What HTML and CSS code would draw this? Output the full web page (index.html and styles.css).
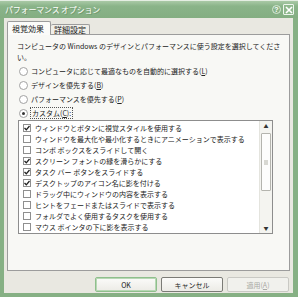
FILE: index.html
```html
<!DOCTYPE html>
<html lang="ja">
<head>
  <meta charset="UTF-8" />
  <title>パフォーマンス オプション</title>
  <link rel="stylesheet" href="styles.css">
</head>
<body>
  <div class="window">
    <div class="titlebar">
      <span class="title">パフォーマンス オプション</span>
      <span class="title-btns">
        <span class="help-btn">?</span>
        <span class="close-btn">
          <svg width="8" height="8" viewBox="0 0 8 8"><path d="M1 1L7 7M7 1L1 7" stroke="#fff" stroke-width="1.6"/></svg>
        </span>
      </span>
    </div>

    <div class="content">
      <div class="tabs">
        <div class="tab active">視覚効果</div>
        <div class="tab">詳細設定</div>
      </div>

      <div class="panel">
        <p class="intro">コンピュータの Windows のデザインとパフォーマンスに使う設定を選択してくださ<br>い。</p>

        <div class="radios">
          <label class="radio-row"><span class="radio"></span>コンピュータに応じて最適なものを自動的に選択する(<u>L</u>)</label>
          <label class="radio-row"><span class="radio"></span>デザインを優先する(<u>B</u>)</label>
          <label class="radio-row"><span class="radio"></span>パフォーマンスを優先する(<u>P</u>)</label>
          <label class="radio-row"><span class="radio on"></span><span class="focus">カスタム(<u>C</u>):</span></label>
        </div>

        <div class="listbox">
          <div class="items" id="items"></div>
          <div class="scrollbar">
            <span class="arrow">&#9650;</span>
            <div class="track">
              <div class="thumb"><span class="grip"></span></div>
            </div>
            <span class="arrow">&#9660;</span>
          </div>
        </div>
      </div>

      <div class="buttons">
        <button class="btn default">OK</button>
        <button class="btn">キャンセル</button>
        <button class="btn disabled">適用(<u>A</u>)</button>
      </div>
    </div>
  </div>

  <script>
    // 視覚効果の一覧（true = チェックあり）
    const effects = [
      ["ウィンドウとボタンに視覚スタイルを使用する", true],
      ["ウィンドウを最大化や最小化するときにアニメーションで表示する", false],
      ["コンボ ボックスをスライドして開く", false],
      ["スクリーン フォントの縁を滑らかにする", true],
      ["タスク バー ボタンをスライドする", true],
      ["デスクトップのアイコン名に影を付ける", true],
      ["ドラッグ中にウィンドウの内容を表示する", false],
      ["ヒントをフェードまたはスライドで表示する", false],
      ["フォルダでよく使用するタスクを使用する", false],
      ["マウス ポインタの下に影を表示する", false]
    ];

    const list = document.getElementById('items');
    effects.forEach(([text, checked]) => {
      const row = document.createElement('div');
      row.className = 'item';

      const box = document.createElement('span');
      box.className = 'check';
      if (checked) {
        box.innerHTML = '<svg width="6" height="6" viewBox="0 0 6 6"><path d="M0.5 3L2.3 4.8L5.5 1" fill="none" stroke="#222" stroke-width="1.3"/></svg>';
      }

      const label = document.createElement('span');
      label.innerText = text;

      row.appendChild(box);
      row.appendChild(label);
      list.appendChild(row);
    });
  </script>
</body>
</html>
```

FILE: styles.css
```css
* {
  box-sizing: border-box;
  margin: 0;
  padding: 0;
}
body {
  width: 298px;
  height: 297px;
  overflow: hidden;
  font-family: "Noto Sans CJK JP", "Liberation Sans", sans-serif;
  font-size: 7px;
  color: #222;
  background: #fff;
}
.window {
  width: 298px;
  height: 297px;
  display: flex;
  flex-direction: column;
  background: #e9e8e1;
  border-left: 4px solid #86b084;
  border-right: 5px solid #86b084;
  border-bottom: 4px solid #86b084;
}
.titlebar {
  height: 18px;
  flex-shrink: 0;
  margin: 0 -5px 0 -4px;
  padding: 0 4px 0 5px;
  display: flex;
  align-items: center;
  justify-content: space-between;
  background: linear-gradient(#a9c9a6, #8ab489 30%, #84ae82);
  border-top: 1px solid #e4eee3;
}
.title {
  color: #fff;
  font-size: 8px;
  text-shadow: 1px 1px 0 #6f986d;
  letter-spacing: -0.2px;
}
.title-btns {
  display: flex;
  align-items: center;
  gap: 2px;
}
.help-btn {
  width: 9px;
  height: 9px;
  border: 1px solid #d8e8d6;
  border-radius: 50%;
  color: #fff;
  font-size: 7px;
  line-height: 7px;
  text-align: center;
  font-family: "Liberation Sans", sans-serif;
  font-weight: bold;
}
.close-btn {
  width: 11px;
  height: 11px;
  border: 1px solid #eef5ed;
  border-radius: 1px;
  display: flex;
  align-items: center;
  justify-content: center;
  background: #8fb88d;
}
.content {
  flex: 1;
  padding: 3px 3px 0 3px;
  display: flex;
  flex-direction: column;
}
.tabs {
  display: flex;
  align-items: flex-end;
  height: 13px;
  position: relative;
  z-index: 1;
}
.tab {
  height: 10px;
  padding: 0 3px;
  font-size: 8px;
  line-height: 10px;
  background: #f0efe9;
  border: 1px solid #9c9c9c;
  border-bottom: none;
  border-left: none;
  border-radius: 2px 2px 0 0;
}
.tab.active {
  height: 14px;
  width: 44px;
  padding: 0 4px;
  line-height: 13px;
  background: #fbfbf9;
  border-left: 1px solid #9c9c9c;
  margin-bottom: -1px;
}
.panel {
  height: 237px;
  margin-top: 0;
  background: #f8f8f5;
  border: 1px solid #9c9c9c;
  padding: 6px 8px 0 9px;
}
.intro {
  line-height: 11px;
  white-space: nowrap;
}
.radios {
  margin-top: 1px;
}
.radio-row {
  height: 14px;
  display: flex;
  align-items: center;
}
.radio {
  width: 9px;
  height: 9px;
  margin: 0 3px 0 2px;
  border: 1px solid #a2a2a2;
  border-radius: 50%;
  background: #fff;
  display: flex;
  align-items: center;
  justify-content: center;
}
.radio.on::after {
  content: "";
  width: 3px;
  height: 3px;
  border-radius: 50%;
  background: #333;
}
.focus {
  outline: 1px dotted #555;
  padding: 0 1px;
}
.listbox {
  height: 114px;
  margin: 0 8px 0 1px;
  border: 1px solid #8d8d8d;
  background: #fff;
  display: flex;
}
.items {
  flex: 1;
  padding: 1px 0 0 4px;
  overflow: hidden;
}
.item {
  height: 11px;
  display: flex;
  align-items: center;
  white-space: nowrap;
}
.check {
  width: 8px;
  height: 8px;
  margin-right: 4px;
  flex-shrink: 0;
  border: 1px solid #8f8f8f;
  background: #fff;
  display: flex;
  align-items: center;
  justify-content: center;
}
.scrollbar {
  width: 13px;
  display: flex;
  flex-direction: column;
  align-items: center;
  background: #f4f4f0;
  border-left: 1px solid #e4e4de;
}
.arrow {
  height: 10px;
  font-size: 5px;
  line-height: 10px;
  color: #333;
}
.track {
  flex: 1;
  width: 100%;
  padding: 0 1px;
}
.thumb {
  height: 58px;
  margin-top: 2px;
  background: #fdfdfc;
  border: 1px solid #b4b4ae;
  border-radius: 1px;
  display: flex;
  align-items: center;
  justify-content: center;
}
.grip {
  width: 4px;
  height: 5px;
  background: #d8d8d2;
}
.buttons {
  display: flex;
  justify-content: flex-end;
  gap: 4px;
  margin-top: 6px;
  padding-right: 1px;
}
.btn {
  width: 62px;
  height: 15px;
  font-family: "Noto Sans CJK JP", "Liberation Sans", sans-serif;
  font-size: 7px;
  color: #222;
  background: linear-gradient(#fbfbf9, #ecebe6);
  border: 1px solid #7b7b76;
  border-radius: 2px;
}
.btn.default {
  border-color: #8fbf8c;
  box-shadow: inset 0 0 0 1px #b7d8b4;
}
.btn.disabled {
  color: #a9a9a4;
  border-color: #c9c9c4;
  background: #f1f1ed;
}
```
